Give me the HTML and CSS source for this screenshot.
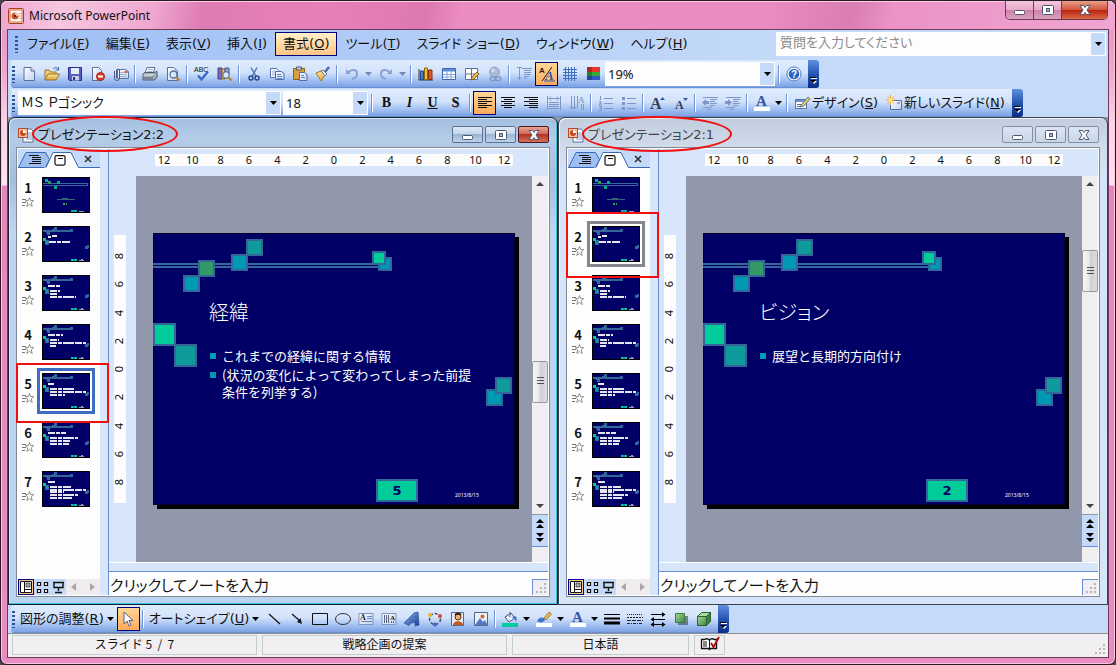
FILE: index.html
```html
<!DOCTYPE html>
<html lang="ja">
<head>
<meta charset="utf-8">
<title>Microsoft PowerPoint</title>
<link rel="stylesheet" href="styles.css">
</head>
<body>
<svg class="defs" aria-hidden="true">
  <defs>
    <linearGradient id="gSheet" x1="0" y1="0" x2="1" y2="1"><stop offset="0" stop-color="#fff"/><stop offset="1" stop-color="#c3d2ee"/></linearGradient>
    <linearGradient id="gGold" x1="0" y1="0" x2="0" y2="1"><stop offset="0" stop-color="#ffeaa0"/><stop offset="1" stop-color="#dfa035"/></linearGradient>
    <linearGradient id="gBlue" x1="0" y1="0" x2="1" y2="1"><stop offset="0" stop-color="#8db4ee"/><stop offset="1" stop-color="#1c3f94"/></linearGradient>
    <linearGradient id="gGreen" x1="0" y1="0" x2="1" y2="1"><stop offset="0" stop-color="#a5d79a"/><stop offset="1" stop-color="#3d8540"/></linearGradient>
  </defs>
  <symbol id="i-app" viewBox="0 0 16 16"><rect x=".5" y=".5" width="15" height="15" rx="1" fill="#fbe9e0" stroke="#a8401c"/><rect x="2" y="2" width="12" height="12" fill="#fff" stroke="#d0663c"/><circle cx="7" cy="8" r="3.6" fill="#cf5a2c"/><path d="M7 8V4.400A3.600 3.600 0 0 1 10.600 8z" fill="#f7c6ae"/><circle cx="7" cy="8" r="1.300" fill="#6b210b"/><path d="M12 5v1M12 7.500v1M12 10v1" stroke="#a8401c"/></symbol>
  <symbol id="i-doc" viewBox="0 0 16 16"><path d="M5 2h8l2 2v11H5z" fill="#fff" stroke="#54719f"/><path d="M10 6h4M10 8h4M10 10h4M8 12h6" stroke="#7f9ccc"/><rect x=".5" y="1.500" width="9" height="9" fill="#f3c3ab" stroke="#b54a24"/><circle cx="5" cy="6" r="3" fill="#c8481c"/><path d="M5 6V3A3 3 0 0 1 8 6z" fill="#fff"/></symbol>
  <symbol id="i-new" viewBox="0 0 16 16"><path d="M3 1.500h7l3.500 3.500v9.500H3z" fill="url(#gSheet)" stroke="#5a6f9c"/><path d="M10 1.500V5h3.500" fill="#dfe8f8" stroke="#5a6f9c"/></symbol>
  <symbol id="i-open" viewBox="0 0 16 16"><path d="M1 14V4h4l1.500 2H12v2" fill="#f6cf6c" stroke="#96752a"/><path d="M1 14l3-6h11.500l-3.500 6z" fill="url(#gGold)" stroke="#96752a"/><path d="M9 3c2-2 4-2 5 0M14.500 1v3h-3" fill="none" stroke="#2b6a9e"/></symbol>
  <symbol id="i-save" viewBox="0 0 16 16"><path d="M1.500 1.500h13v13h-12l-1-1z" fill="#5560c0" stroke="#2b2f86"/><path d="M4 2h8v6H4z" fill="#e5edfb"/><path d="M5 10h7v4.500H5z" fill="#c9cfec"/><path d="M6 11h2v3H6z" fill="#2b2f86"/></symbol>
  <symbol id="i-perm" viewBox="0 0 16 16"><path d="M2.500 1.500h6l3 3v10h-9z" fill="url(#gSheet)" stroke="#5a6f9c"/><circle cx="10.500" cy="10.500" r="4" fill="#dd3d22" stroke="#a32610"/><path d="M8 10.500h5" stroke="#fff" stroke-width="2"/></symbol>
  <symbol id="i-mail" viewBox="0 0 16 16"><path d="M4.500 3.500h8l3 2v7h-11z" fill="url(#gSheet)" stroke="#5a76a8"/><path d="M7 6.500h4M7 8.500h6M7 10.500h6" stroke="#9fb4dc"/><path d="M11.500 5h3v2h-3z" fill="#d4543a"/><path d="M1.500 5v7a2.500 2.500 0 0 0 5 0V4a1.700 1.700 0 0 0-3 0v8" fill="none" stroke="#475b86"/></symbol>
  <symbol id="i-print" viewBox="0 0 16 16"><path d="M5 1.500h8l-2 6H3z" fill="#fff" stroke="#5a6f9c"/><path d="M6 3.500h5M5.500 5.500h5" stroke="#9fb0d0"/><path d="M1 8l2-1.500h9l3-1v6L12 14H1z" fill="#a7b0c0" stroke="#4a556c"/><path d="M1.500 9h10" stroke="#e8ecf4"/><path d="M2 12h9" stroke="#4a556c"/><path d="M10 10h2v1h-2z" fill="#3fc13f"/></symbol>
  <symbol id="i-preview" viewBox="0 0 16 16"><path d="M2.500 1.500h6l4 3.500v9.500h-10z" fill="url(#gSheet)" stroke="#5a6f9c"/><circle cx="8.500" cy="8.500" r="3.500" fill="#d6eaf7" stroke="#51709b" stroke-width="1.300"/><path d="M11.500 11.500l3 3" stroke="#c77a1c" stroke-width="2.200"/></symbol>
  <symbol id="i-research" viewBox="0 0 16 16"><path d="M1 2h4v11H1z" fill="#7a6ab8" stroke="#4b3c83"/><path d="M5 3h3v10H5z" fill="#f0c462" stroke="#8f6a1e"/><path d="M8 2h4v7H8z" fill="#8ba7dc" stroke="#3e5a96"/><circle cx="9" cy="9" r="3.300" fill="#d6eaf7" stroke="#41608f"/><path d="M11.500 11.500l3 3" stroke="#c77a1c" stroke-width="2.200"/></symbol>
  <symbol id="i-cut" viewBox="0 0 16 16"><path d="M5 1.500l5 9M11 1.500l-5 9" stroke="#5578b0" stroke-width="1.500"/><circle cx="5" cy="12" r="2" fill="none" stroke="#26478e" stroke-width="1.500"/><circle cx="11" cy="12" r="2" fill="none" stroke="#26478e" stroke-width="1.500"/></symbol>
  <symbol id="i-copy" viewBox="0 0 16 16"><path d="M1.500 2.500h6l2 2v7h-8z" fill="#fff" stroke="#4e6cae"/><path d="M3 5h4M3 7h4M3 9h4" stroke="#8ba7dc"/><path d="M6.500 5.500h6l2.500 2v6H6.500z" fill="url(#gSheet)" stroke="#4e6cae"/><path d="M8 8.500h4M8 10.500h5M8 12.500h5" stroke="#5f85cc"/></symbol>
  <symbol id="i-paste" viewBox="0 0 16 16"><path d="M1.500 2.500h11v11h-11z" fill="#dc9f3d" stroke="#8b5f1b"/><path d="M4.500 1h5v3h-5z" fill="#c8cbd6" stroke="#565c70"/><path d="M7.500 6.500h5l2.500 2v6H7.500z" fill="url(#gSheet)" stroke="#4e6cae"/><path d="M9 9.500h3M9 11.500h4" stroke="#5f85cc"/></symbol>
  <symbol id="i-brush" viewBox="0 0 16 16"><path d="M1 7l5-2 4 4-4 6z" fill="url(#gGold)" stroke="#a77a1c"/><path d="M6 5l2-1 4 4-2 2z" fill="#e6e9f2" stroke="#666f86"/><path d="M10 6l4-5" stroke="#5565a6" stroke-width="2.400"/></symbol>
  <symbol id="i-undo" viewBox="0 0 16 16"><path d="M2 3v5h5z" fill="#8aa3d2"/><path d="M4 6.500c4-4 9-3 9 1 0 3-2 5-5 5.500" fill="none" stroke="#8aa3d2" stroke-width="2"/></symbol>
  <symbol id="i-redo" viewBox="0 0 16 16"><path d="M14 3v5H9z" fill="#8aa3d2"/><path d="M12 6.500c-4-4-9-3-9 1 0 3 2 5 5 5.500" fill="none" stroke="#8aa3d2" stroke-width="2"/></symbol>
  <symbol id="i-chart" viewBox="0 0 16 16"><path d="M1 3v11h14" fill="none" stroke="#333"/><path d="M2.500 5h3v8.500h-3z" fill="#4c7fd6" stroke="#25427f"/><path d="M6.500 2h3v11.500h-3z" fill="#f4c132" stroke="#8a6510"/><path d="M10.500 4h3.500v9.500h-3.500z" fill="#e0542c" stroke="#862a10"/></symbol>
  <symbol id="i-table" viewBox="0 0 16 16"><path d="M1.500 2.500h13v11h-13z" fill="#fff" stroke="#3e66b4"/><path d="M2 3h12v2.500H2z" fill="#5f8cd9"/><path d="M2 8.500h12M2 11h12M6 5v8M10 5v8" stroke="#87a8de"/></symbol>
  <symbol id="i-tborder" viewBox="0 0 16 16"><path d="M1.500 2.500h12v11h-12z" fill="#fff" stroke="#5a6f9c"/><path d="M7.500 3v10M2 8h11" stroke="#5a6f9c"/><path d="M7 14l1-3 5-5 2 2-5 5z" fill="#f1b84a" stroke="#8a5c1b"/></symbol>
  <symbol id="i-link" viewBox="0 0 16 16"><circle cx="7.500" cy="6" r="5" fill="#a9bbdb" stroke="#8fa3ca"/><circle cx="6" cy="4.500" r="2" fill="#cad7ec"/><rect x="3" y="11" width="6" height="3.500" rx="1.700" fill="none" stroke="#8095bf" stroke-width="1.300"/><rect x="8" y="11" width="6" height="3.500" rx="1.700" fill="none" stroke="#8095bf" stroke-width="1.300"/></symbol>
  <symbol id="i-expand" viewBox="0 0 16 16"><path d="M3.500 1v12M1.500 11l2 2.500 2-2.500M1 1.500h5" fill="none" stroke="#7f97c6"/><path d="M6 2.500h10M8 4.500h7M8 6.500h7M8 8.500h7M8 10.500h5M8 12.500h3" stroke="#7f97c6"/></symbol>
  <symbol id="i-grid" viewBox="0 0 16 16"><path d="M3.500 1v14M6.500 1v14M9.500 1v14M12.500 1v14M1 3.500h14M1 6.500h14M1 9.500h14M1 12.500h14" stroke="#3f6fc4"/></symbol>
  <symbol id="i-color" viewBox="0 0 16 16"><path d="M2 1h13v5H2z" fill="#e8352a"/><path d="M2 6h13v4H2z" fill="#2fae3b"/><path d="M2 10h13v4H2z" fill="#3158c4"/><path d="M2 1h5v13H2z" fill="#000" opacity=".25"/></symbol>
  <symbol id="i-left" viewBox="0 0 16 16"><path d="M1 2.500h14M1 4.500h9M1 6.500h14M1 8.500h9M1 10.500h14M1 12.500h9" stroke="#111"/></symbol>
  <symbol id="i-center" viewBox="0 0 16 16"><path d="M1 2.500h14M4 4.500h8M1 6.500h14M4 8.500h8M1 10.500h14M4 12.500h8" stroke="#111"/></symbol>
  <symbol id="i-right" viewBox="0 0 16 16"><path d="M1 2.500h14M6 4.500h9M1 6.500h14M6 8.500h9M1 10.500h14M6 12.500h9" stroke="#111"/></symbol>
  <symbol id="i-distrib" viewBox="0 0 16 16"><path d="M1.500 1v14M14.500 1v14M3 3.500h10M5 1.500l-2 2 2 2M11 1.500l2 2-2 2M3 7.500h10M3 9.500h10M3 11.500h10M3 13.500h10" fill="none" stroke="#7f97c6"/></symbol>
  <symbol id="i-num" viewBox="0 0 16 16"><path d="M6 3.500h9M6 8.500h9M6 13.500h9M2.500 1v4M1 6.500h2v2H1.500v1.500H4M1 11.500h2.500v4H1M1.500 13.500h2" fill="none" stroke="#7f97c6"/></symbol>
  <symbol id="i-bullet" viewBox="0 0 16 16"><path d="M6 3.500h9M6 8.500h9M6 13.500h9" stroke="#7f97c6"/><path d="M1 2h3v3H1zM1 7h3v3H1zM1 12h3v3H1z" fill="#7f97c6"/></symbol>
  <symbol id="i-outdent" viewBox="0 0 16 16"><path d="M1 2.500h15M8 4.500h7M8 6.500h5M8 8.500h7M8 10.500h5M1 12.500h9M5 14.500h4" stroke="#7f97c6"/><path d="M0 7.500L4 4v2h3v3H4v2z" fill="#7f97c6"/></symbol>
  <symbol id="i-indent" viewBox="0 0 16 16"><path d="M1 2.500h15M8 4.500h7M8 6.500h5M8 8.500h7M8 10.500h5M1 12.500h9M5 14.500h4" stroke="#7f97c6"/><path d="M7 7.500L3 4v2H0v3h3v2z" fill="#7f97c6"/></symbol>
  <symbol id="i-design" viewBox="0 0 16 16"><path d="M1.500 4.500h11v9h-11z" fill="#fff" stroke="#54719f"/><path d="M2 5h10v2H2z" fill="#6b92d6"/><path d="M3 9.500h6M3 11.500h4" stroke="#54719f"/><path d="M6 12l2-3 6-7 2 2-6 7z" fill="#e9c96f" stroke="#4b5f80" stroke-width=".8"/></symbol>
  <symbol id="i-newslide" viewBox="0 0 16 16"><path d="M4.500 5.500h11v9h-11z" fill="url(#gSheet)" stroke="#54719f"/><path d="M11 8h3" stroke="#54719f"/><path d="M4.500 0v10M0 5h9.500M1.500 1.500l6.500 7M8 1.500l-6.500 7" stroke="#f0a92a"/><circle cx="4.700" cy="5" r="2" fill="#ffe98a"/></symbol>
  <symbol id="i-pointer" viewBox="0 0 16 16"><path d="M4 1v12l3-3 2 5 2-1-2-4.500h4z" fill="#fff" stroke="#555f86"/></symbol>
  <symbol id="i-line" viewBox="0 0 16 16"><path d="M3 3l11 10" stroke="#111" stroke-width="1.200"/></symbol>
  <symbol id="i-arrow" viewBox="0 0 16 16"><path d="M3 3l8 7" stroke="#111" stroke-width="1.200"/><path d="M13 13l-5-2 3.500-4z" fill="#111"/></symbol>
  <symbol id="i-rect" viewBox="0 0 16 16"><path d="M.5 2.500h15v11H.5z" fill="none" stroke="#111"/></symbol>
  <symbol id="i-oval" viewBox="0 0 16 16"><ellipse cx="8" cy="8" rx="7.500" ry="5.500" fill="none" stroke="#333"/></symbol>
  <symbol id="i-wordart" viewBox="0 0 16 16"><path d="M0 12L10 2l4-1 1 13-4 1v-3.500L7 12l-2 2.500zM8.500 9l2.500-.5V5.500z" fill="url(#gBlue)" stroke="#234d9f" stroke-width=".7"/></symbol>
  <symbol id="i-diagram" viewBox="0 0 16 16"><circle cx="8" cy="8" r="5.500" fill="none" stroke="#41506e" stroke-width="1.500" stroke-dasharray="3 2"/><circle cx="3" cy="4" r="2" fill="#e9b82f"/><circle cx="13" cy="5" r="2" fill="#d5482c"/><circle cx="8" cy="13.500" r="2" fill="#4c5fc9"/></symbol>
  <symbol id="i-clip" viewBox="0 0 16 16"><path d="M1.500 1.500h12v13h-12z" fill="#e9eefa" stroke="#54648e"/><circle cx="8" cy="6" r="3" fill="#f0b070" stroke="#5b2e0d"/><path d="M3 14c0-5 10-5 10 0z" fill="#c65a1e"/><path d="M5 4c2-2 4-2 6 0" stroke="#3e1f0a" stroke-width="2" fill="none"/></symbol>
  <symbol id="i-pic" viewBox="0 0 16 16"><path d="M1.500 1.500h13v13h-13z" fill="#e9f1fd" stroke="#54648e"/><path d="M2 14l5-7 3 4 2-2 2.500 5z" fill="#5377c4"/><circle cx="9.500" cy="5.500" r="2" fill="#e4602b"/></symbol>
  <symbol id="i-fill" viewBox="0 0 16 16"><path d="M3 6l6-4 4 5-6 4z" fill="#e8eefa" stroke="#3f5686"/><path d="M8 1v5" stroke="#3f5686"/><path d="M12 5c3 0 3 3 2 6-1-3-2-4-4-4z" fill="#3f74cc"/><path d="M0 12h16v4H0z" fill="#00cc99"/></symbol>
  <symbol id="i-lcolor" viewBox="0 0 16 16"><path d="M1 10c2-4 5-4 7-3l1 2c-2 3-5 3-8 1z" fill="#3f74cc"/><path d="M8 7l5-6 2.500 2L10 9z" fill="#eab54b" stroke="#8d6420" stroke-width=".7"/><path d="M0 12h16v4H0z" fill="#fff"/></symbol>
  <symbol id="i-lweight" viewBox="0 0 16 16"><path d="M0 3.500h16" stroke="#000"/><path d="M0 7.500h16" stroke="#000" stroke-width="2"/><path d="M0 12h16" stroke="#000" stroke-width="3"/></symbol>
  <symbol id="i-dash" viewBox="0 0 16 16"><path d="M0 3.500h16" stroke="#222" stroke-dasharray="1 1"/><path d="M0 6.500h16" stroke="#222" stroke-dasharray="2 1"/><path d="M0 9.500h16" stroke="#222" stroke-dasharray="4 1"/><path d="M0 12.500h16" stroke="#222" stroke-dasharray="3 1 1 1"/></symbol>
  <symbol id="i-arrows" viewBox="0 0 16 16"><path d="M1 3.500h13M2 8.500h13M1 13.500h14" stroke="#000"/><path d="M15.500 3.500L12 1v5zM.5 8.500L4 6v5zM15.500 13.500L12 11v5zM.5 13.500L4 11v5z" fill="#000"/></symbol>
  <symbol id="i-shadow" viewBox="0 0 16 16"><path d="M5 5h10v9H5z" fill="#37444c" opacity=".6"/><path d="M2.500 2.500h9v9h-9z" fill="url(#gGreen)" stroke="#3d7a3f"/></symbol>
  <symbol id="i-cube" viewBox="0 0 16 16"><path d="M1.500 5.500l4-4h9v9l-4 4h-9z" fill="#a9dba0" stroke="#28622c"/><path d="M1.500 5.500h9v9h-9z" fill="url(#gGreen)" stroke="#28622c"/><path d="M10.500 5.500l4-4v9l-4 4z" fill="#3c8140" stroke="#28622c"/></symbol>
  <symbol id="i-normal" viewBox="0 0 16 16"><path d="M2.500 2.500h11v11h-11zM6.500 3v10M7 10.500h6" fill="#fff" stroke="#111"/><path d="M8 4h4v4H8z" fill="#a9a9a9" stroke="#111" stroke-width=".6"/></symbol>
  <symbol id="i-sorter" viewBox="0 0 16 16"><path d="M3.500 3.500h3v3h-3zM10.500 3.500h3v3h-3zM3.500 10.500h3v3h-3zM10.500 10.500h3v3h-3z" fill="#fff" stroke="#111" stroke-width="1.200"/></symbol>
  <symbol id="i-show" viewBox="0 0 16 16"><path d="M3 3.500h11M4 4v4.500h9V4M8.500 9v3M5 13.500h7" fill="none" stroke="#111" stroke-width="1.400"/></symbol>
  <symbol id="i-dd" viewBox="0 0 7 4"><path d="M0 0h7L3.500 4z"/></symbol>
  <symbol id="i-more" viewBox="0 0 8 8"><path d="M1 1.500h6" stroke="#fff"/><path d="M1 4h6L4 7z" fill="#fff"/><path d="M0 .5h6" stroke="#000"/><path d="M0 3h6L3 6z"/></symbol>
  <symbol id="i-min" viewBox="0 0 14 12"><rect x="1.500" y="6.500" width="10" height="4" rx="1" fill="#fff" stroke="#4f5870"/></symbol>
  <symbol id="i-max" viewBox="0 0 14 12"><rect x="1.500" y="1.500" width="11" height="9" rx="1" fill="#fff" stroke="#4f5870"/><rect x="5.500" y="4.500" width="3" height="3" fill="#9fb4d8" stroke="#4f5870"/></symbol>
  <symbol id="i-x" viewBox="0 0 14 12"><path d="M2 1.500h3.500L7 3.500l1.500-2H12L9 6l3 4.500H8.500L7 8.500l-1.500 2H2L5 6z" fill="#fff" stroke="#4f5870"/></symbol>
  <symbol id="i-star" viewBox="0 0 12 10"><path d="M7.500.5L8.700 3.600h3L9.300 5.800l.9 3.700-2.700-2.100-2.700 2.100.9-3.700L3.300 3.600h3z" fill="#fff" stroke="#777" stroke-width=".8"/><path d="M0 2.500h4M0 5.500h4M0 8.500h3" stroke="#777"/></symbol>
  <symbol id="i-tabs" viewBox="0 0 82 19"><path d="M.5 18.500L8 3.500h19.500l4 7-4 8z" fill="#9fbef2" stroke="#3b68b2"/><path d="M26 18.500h2l7-15h18l7.500 15H82V19H26z" fill="#fdfdfd"/><path d="M28 18.500l7-15h18l7.500 15H82" fill="none" stroke="#3b68b2"/></symbol>
  <symbol id="i-outline" viewBox="0 0 12 10"><path d="M0 .5h10M3 2.500h9M3 4.500h9M3 6.500h9M0 8.500h12" stroke="#111"/></symbol>
  <symbol id="i-slides" viewBox="0 0 12 11"><rect x="1" y=".6" width="10" height="9.500" rx="1.500" fill="#fff" stroke="#111" stroke-width="1.200"/><path d="M4 3.500h5" stroke="#111"/></symbol>
  <symbol id="i-tabx" viewBox="0 0 8 8"><path d="M1 1l6 6M7 1L1 7" stroke="#333" stroke-width="1.700"/></symbol>
  <symbol id="i-up" viewBox="0 0 8 4"><path d="M0 4l4-4 4 4z" fill="#444"/></symbol>
  <symbol id="i-down" viewBox="0 0 8 4"><path d="M0 0l4 4 4-4z" fill="#444"/></symbol>
  <symbol id="i-dup" viewBox="0 0 8 10"><path d="M0 4l4-4 4 4zM0 9l4-4 4 4z"/></symbol>
  <symbol id="i-ddown" viewBox="0 0 8 10"><path d="M0 1l4 4 4-4zM0 6l4 4 4-4z"/></symbol>
  <symbol id="i-prev" viewBox="0 0 5 8"><path d="M5 0v8L0 4z" fill="#aaa6a6"/></symbol>
  <symbol id="i-next" viewBox="0 0 5 8"><path d="M0 0v8l5-4z" fill="#aaa6a6"/></symbol>
  <symbol id="i-size" viewBox="0 0 12 12"><path d="M9 1h2v2H9zM9 5h2v2H9zM5 5h2v2H5zM9 9h2v2H9zM5 9h2v2H5zM1 9h2v2H1z" fill="#b9b5b2"/></symbol>
  <symbol id="i-book" viewBox="0 0 20 16"><path d="M1.500 3.500h3C7 2 9 3 9.500 4.500 10 3 12 2 14.500 3.500h2v9h-6l-1 1-1-1h-7z" fill="#fff" stroke="#111" stroke-width="1.300"/><path d="M9.500 4.500v8M3 6h4M3 8h4M3 10h4" stroke="#111"/><path d="M11 7l2.500 4L19 1" fill="none" stroke="#a80f0f" stroke-width="2"/></symbol>

  <symbol id="slide-art" viewBox="0 0 362 272">
    <path d="M0 31h228M0 34h228" stroke="#336699" stroke-width="2"/>
    <g stroke="#336699" stroke-width="2">
      <rect x="94" y="7" width="15" height="15" fill="#0f9b9b"/><rect x="79" y="22" width="15" height="15" fill="#0099b4"/>
      <rect x="46" y="28" width="15" height="15" fill="#339966"/><rect x="31" y="43" width="15" height="15" fill="#0099b4"/>
      <rect x="226" y="25" width="12" height="12" fill="#0099b4"/><rect x="220" y="19" width="12" height="12" fill="#00cc99"/>
      <rect x="1" y="91" width="21" height="21" fill="#00cc99"/><rect x="22" y="112" width="21" height="21" fill="#0f9b9b"/>
      <rect x="334" y="157" width="15" height="15" fill="#0099b4"/><rect x="343" y="145" width="15" height="15" fill="#0f9b9b"/>
    </g>
  </symbol>
  <symbol id="thumb-art" viewBox="0 0 48 36">
    <path d="M0 0h48v36H0z" fill="#000066"/>
    <path d="M1 4h30v2H1zM12 1h3v3h-3zM10 3h3v3h-3zM4 5h4v2H4zM5 6h3v3H5zM28 3h3v3h-3zM3 14h4v5H3zM45 19h2v3h-2zM43 20h3v3h-3z" fill="#336699"/>
    <path d="M1 12h3v3H1zM29 33h6v2h-6z" fill="#00cc99"/><path d="M4 15h2v3H4zM31 33h2v2h-2z" fill="#0f9b9b"/><path d="M37 34h5M39 33h2" stroke="#99a"/>
    <path d="M0 0h48v36H0z" fill="none" stroke="#000" stroke-width="2"/>
  </symbol>
  <symbol id="thumb1" viewBox="0 0 48 36">
    <path d="M0 0h48v36H0z" fill="#000066"/><path d="M1 6.500h44v2H1" fill="none" stroke="#336699"/>
    <path d="M3 2h3v3H3zM12 9h3v3h-3zM15 4h3v3h-3z" fill="#00b090"/><path d="M6 4h3v3H6z" fill="#339966"/>
    <path d="M15 22.500h18M20 21.500h6" stroke="#367"/><path d="M21 27h4" stroke="#396" stroke-width="2" stroke-dasharray="2 1"/>
    <path d="M29 33h6v2h-6z" fill="#00b090"/><path d="M37 34h5" stroke="#99a"/>
    <path d="M0 0h48v36H0z" fill="none" stroke="#000" stroke-width="2"/>
  </symbol>
  <symbol id="thumb2" viewBox="0 0 48 36"><use href="#thumb-art"/><path d="M6 11h3M10 10h5M7 16h21" class="tl"/></symbol>
  <symbol id="thumb3" viewBox="0 0 48 36"><use href="#thumb-art"/><path d="M6 11h13M8 16h10M8 19h8M8 22h26" class="tl"/></symbol>
  <symbol id="thumb4" viewBox="0 0 48 36"><use href="#thumb-art"/><path d="M6 11h15M8 16h9M8 19h36M8 22h6" class="tl"/></symbol>
  <symbol id="thumb5" viewBox="0 0 48 36"><use href="#thumb-art"/><path d="M6 11h6M8 16h25M8 19h36M8 22h15" class="tl"/></symbol>
  <symbol id="thumb6" viewBox="0 0 48 36"><use href="#thumb-art"/><path d="M6 11h18M8 16h28M8 19h20M8 22h19" class="tl"/></symbol>
  <symbol id="thumb7" viewBox="0 0 48 36"><use href="#thumb-art"/><path d="M6 11h7M8 16h21M8 19h36M8 21h14M8 24h28M8 27h22" class="tl"/></symbol>
</svg>

<div class="frame">
  <header class="titlebar">
    <svg class="ic"><use href="#i-app"/></svg>
    <h1>Microsoft PowerPoint</h1>
    <div class="caption-buttons">
      <button aria-label="最小化"><svg><use href="#i-min"/></svg></button>
      <button aria-label="最大化"><svg><use href="#i-max"/></svg></button>
      <button class="close" aria-label="閉じる"><svg><use href="#i-x"/></svg></button>
    </div>
  </header>

  <div class="client">
    <nav class="menubar">
      <i class="grip"></i>
      <button>ファイル(<u>F</u>)</button><button>編集(<u>E</u>)</button><button>表示(<u>V</u>)</button><button>挿入(<u>I</u>)</button><button class="on">書式(<u>O</u>)</button><button>ツール(<u>T</u>)</button><button>スライド ショー(<u>D</u>)</button><button>ウィンドウ(<u>W</u>)</button><button>ヘルプ(<u>H</u>)</button>
      <div class="ask"><input type="text" aria-label="質問" placeholder="質問を入力してください"><button class="arrow" aria-label="質問の一覧"><svg><use href="#i-dd"/></svg></button></div>
    </nav>

    <div class="toolbar">
      <i class="grip"></i>
      <button class="tb" aria-label="新規作成"><svg class="ic"><use href="#i-new"/></svg></button>
      <button class="tb" aria-label="開く"><svg class="ic"><use href="#i-open"/></svg></button>
      <button class="tb" aria-label="上書き保存"><svg class="ic"><use href="#i-save"/></svg></button>
      <button class="tb" aria-label="アクセス許可"><svg class="ic"><use href="#i-perm"/></svg></button>
      <button class="tb" aria-label="電子メール"><svg class="ic"><use href="#i-mail"/></svg></button>
      <i class="sep"></i>
      <button class="tb" aria-label="印刷"><svg class="ic"><use href="#i-print"/></svg></button>
      <button class="tb" aria-label="印刷プレビュー"><svg class="ic"><use href="#i-preview"/></svg></button>
      <i class="sep"></i>
      <button class="tb" aria-label="スペル チェック"><svg class="ic" viewBox="0 0 16 16"><text x="0" y="6" font-family="Liberation Sans" font-size="7" fill="#111">ABC</text><path d="M4 9.500l3.500 4L14 5.500" fill="none" stroke="#3a68c8" stroke-width="2.400"/></svg></button>
      <button class="tb" aria-label="リサーチ"><svg class="ic"><use href="#i-research"/></svg></button>
      <i class="sep"></i>
      <button class="tb" aria-label="切り取り"><svg class="ic"><use href="#i-cut"/></svg></button>
      <button class="tb" aria-label="コピー"><svg class="ic"><use href="#i-copy"/></svg></button>
      <button class="tb" aria-label="貼り付け"><svg class="ic"><use href="#i-paste"/></svg></button>
      <button class="tb" aria-label="書式のコピー"><svg class="ic"><use href="#i-brush"/></svg></button>
      <i class="sep"></i>
      <button class="tb" aria-label="元に戻す"><svg class="ic"><use href="#i-undo"/></svg></button>
      <button class="dd off" aria-label="元に戻す一覧"><svg><use href="#i-dd"/></svg></button>
      <button class="tb" aria-label="やり直し"><svg class="ic"><use href="#i-redo"/></svg></button>
      <button class="dd off" aria-label="やり直し一覧"><svg><use href="#i-dd"/></svg></button>
      <i class="sep"></i>
      <button class="tb" aria-label="グラフ"><svg class="ic"><use href="#i-chart"/></svg></button>
      <button class="tb" aria-label="表"><svg class="ic"><use href="#i-table"/></svg></button>
      <button class="tb" aria-label="罫線"><svg class="ic"><use href="#i-tborder"/></svg></button>
      <button class="tb" aria-label="ハイパーリンク"><svg class="ic"><use href="#i-link"/></svg></button>
      <i class="sep"></i>
      <button class="tb" aria-label="すべて展開"><svg class="ic"><use href="#i-expand"/></svg></button>
      <button class="tb on" aria-label="書式の表示"><svg class="ic" viewBox="0 0 16 16"><text x="0" y="7" font-family="Liberation Sans" font-weight="bold" font-size="8" fill="#222">A</text><path d="M3 15L13 1" stroke="#222"/><text x="6" y="14" font-family="Liberation Serif" font-weight="bold" font-style="italic" font-size="13" fill="#2b58b8">A</text><path d="M5 15h11" stroke="#2b58b8"/></svg></button>
      <button class="tb" aria-label="グリッド"><svg class="ic"><use href="#i-grid"/></svg></button>
      <button class="tb" aria-label="カラー"><svg class="ic"><use href="#i-color"/></svg></button>
      <div class="combo zoom"><select aria-label="ズーム"><option>19%</option></select><span class="arrow"><svg><use href="#i-dd"/></svg></span></div>
      <i class="sep"></i>
      <button class="tb" aria-label="ヘルプ"><svg class="ic" viewBox="0 0 16 16"><circle cx="8" cy="8" r="7" fill="#fff" stroke="#4e78bc"/><circle cx="8" cy="8" r="5.300" fill="#2765c8"/><text x="5" y="12" font-family="Liberation Sans" font-weight="bold" font-size="10" fill="#fff">?</text></svg></button>
      <button class="cap" aria-label="ツール バー オプション"><svg><use href="#i-more"/></svg></button>
    </div>

    <div class="toolbar">
      <i class="grip"></i>
      <div class="combo font"><select aria-label="フォント"><option>ＭＳ Ｐゴシック</option></select><span class="arrow"><svg><use href="#i-dd"/></svg></span></div>
      <div class="combo size"><select aria-label="フォント サイズ"><option>18</option></select><span class="arrow"><svg><use href="#i-dd"/></svg></span></div>
      <i class="sep"></i>
      <button class="tb ltr b">B</button><button class="tb ltr i">I</button><button class="tb ltr u">U</button><button class="tb ltr s">S</button>
      <i class="sep"></i>
      <button class="tb on" aria-label="左揃え"><svg class="ic"><use href="#i-left"/></svg></button>
      <button class="tb" aria-label="中央揃え"><svg class="ic"><use href="#i-center"/></svg></button>
      <button class="tb" aria-label="右揃え"><svg class="ic"><use href="#i-right"/></svg></button>
      <button class="tb" aria-label="均等割り付け"><svg class="ic"><use href="#i-distrib"/></svg></button>
      <button class="tb" aria-label="縦書き"><svg class="ic" viewBox="0 0 16 16"><path d="M2.500 1v13M5.500 1v13M8.500 1v13M1 12l1.500 2L4 12M4 12l1.500 2L7 12M12.500 9v6M14.500 9v6" fill="none" stroke="#7f97c6"/><text x="9" y="8" font-family="Liberation Serif" font-size="9" fill="#6f88bb">A</text></svg></button>
      <i class="sep"></i>
      <button class="tb" aria-label="段落番号"><svg class="ic"><use href="#i-num"/></svg></button>
      <button class="tb" aria-label="箇条書き"><svg class="ic"><use href="#i-bullet"/></svg></button>
      <i class="sep"></i>
      <button class="tb" aria-label="文字の拡大"><svg class="ic" viewBox="0 0 16 16"><text x="0" y="14" font-family="Liberation Serif" font-weight="bold" font-size="16" fill="#333d55">A</text><path d="M10 5l2.500-3L15 5z" fill="#2c57b3"/></svg></button>
      <button class="tb" aria-label="文字の縮小"><svg class="ic" viewBox="0 0 16 16"><text x="2" y="14" font-family="Liberation Serif" font-weight="bold" font-size="12" fill="#333d55">A</text><path d="M10 3h5l-2.500 3z" fill="#2c57b3"/></svg></button>
      <i class="sep"></i>
      <button class="tb" aria-label="インデント解除"><svg class="ic"><use href="#i-outdent"/></svg></button>
      <button class="tb" aria-label="インデント"><svg class="ic"><use href="#i-indent"/></svg></button>
      <i class="sep"></i>
      <button class="tb" aria-label="フォントの色"><svg class="ic" viewBox="0 0 16 16"><text x="2" y="11" font-family="Liberation Serif" font-weight="bold" font-size="15" fill="#35569b">A</text><path d="M0 12h16v4H0z" fill="#fff"/></svg></button>
      <button class="dd" aria-label="フォントの色一覧"><svg><use href="#i-dd"/></svg></button>
      <i class="sep"></i>
      <button class="txt"><svg class="ic"><use href="#i-design"/></svg><span>デザイン(<u>S</u>)</span></button>
      <button class="txt"><svg class="ic"><use href="#i-newslide"/></svg><span>新しいスライド(<u>N</u>)</span></button>
      <button class="cap" aria-label="ツール バー オプション"><svg><use href="#i-more"/></svg></button>
    </div>

    <main class="mdi">
      <section class="win">
        <header class="wintitle">
          <svg class="ic"><use href="#i-doc"/></svg><h2>プレゼンテーション2:2</h2>
          <div class="winbuttons"><button aria-label="最小化"><svg><use href="#i-min"/></svg></button><button aria-label="最大化"><svg><use href="#i-max"/></svg></button><button class="close" aria-label="閉じる"><svg><use href="#i-x"/></svg></button></div>
          <i class="ring"></i>
        </header>
        <div class="doc">
          <aside class="pane">
            <div class="tabs"><svg class="tabart"><use href="#i-tabs"/></svg><button aria-label="アウトライン"><svg class="t1"><use href="#i-outline"/></svg></button><button aria-label="スライド"><svg class="t2"><use href="#i-slides"/></svg></button><button aria-label="閉じる"><svg class="t3"><use href="#i-tabx"/></svg></button></div>
            <ol class="thumbs">
              <li><span class="no"><b>1</b><svg><use href="#i-star"/></svg></span><svg class="th"><use href="#thumb1"/></svg></li>
              <li><span class="no"><b>2</b><svg><use href="#i-star"/></svg></span><svg class="th"><use href="#thumb2"/></svg></li>
              <li><span class="no"><b>3</b><svg><use href="#i-star"/></svg></span><svg class="th"><use href="#thumb3"/></svg></li>
              <li><span class="no"><b>4</b><svg><use href="#i-star"/></svg></span><svg class="th"><use href="#thumb4"/></svg></li>
              <li class="sel"><span class="no"><b>5</b><svg><use href="#i-star"/></svg></span><svg class="th"><use href="#thumb5"/></svg><i class="mark"></i></li>
              <li><span class="no"><b>6</b><svg><use href="#i-star"/></svg></span><svg class="th"><use href="#thumb6"/></svg></li>
              <li><span class="no"><b>7</b><svg><use href="#i-star"/></svg></span><svg class="th"><use href="#thumb7"/></svg></li>
            </ol>
            <div class="views"><button class="on" aria-label="標準表示"><svg class="ic"><use href="#i-normal"/></svg></button><button aria-label="スライド一覧"><svg class="ic"><use href="#i-sorter"/></svg></button><button aria-label="スライド ショー"><svg class="ic"><use href="#i-show"/></svg></button><span class="hscroll"><svg><use href="#i-prev"/></svg><svg><use href="#i-next"/></svg></span></div>
          </aside>
          <div class="split"></div>
          <div class="edit">
            <div class="rowtop"><div class="hruler"><span>12</span><span>10</span><span>8</span><span>6</span><span>4</span><span>2</span><span>0</span><span>2</span><span>4</span><span>6</span><span>8</span><span>10</span><span>12</span></div></div>
            <div class="rowmid">
              <div class="vcol"><div class="vruler"><span>8</span><span>6</span><span>4</span><span>2</span><span>0</span><span>2</span><span>4</span><span>6</span><span>8</span></div></div>
              <div class="stage">
                <article class="slide">
                  <svg class="art"><use href="#slide-art"/></svg>
                  <h3>経緯</h3>
                  <ul><li>これまでの経緯に関する情報</li><li>(状況の変化によって変わってしまった前提条件を列挙する)</li></ul>
                  <footer><b>5</b><time>2013/8/15</time></footer>
                </article>
              </div>
              <div class="scroll">
                <button aria-label="上へ"><svg class="a"><use href="#i-up"/></svg></button>
                <div class="track at5"><i class="knob"></i></div>
                <button aria-label="下へ"><svg class="a"><use href="#i-down"/></svg></button>
                <div class="jump"><button aria-label="前のスライド"><svg><use href="#i-dup"/></svg></button><button aria-label="次のスライド"><svg><use href="#i-ddown"/></svg></button></div>
              </div>
            </div>
            <div class="hsplit"></div>
            <div class="notes"><textarea rows="1" aria-label="ノート" placeholder="クリックしてノートを入力"></textarea><div class="corner"><svg><use href="#i-size"/></svg></div></div>
          </div>
        </div>
      </section>

      <section class="win idle">
        <header class="wintitle">
          <svg class="ic"><use href="#i-doc"/></svg><h2>プレゼンテーション2:1</h2>
          <div class="winbuttons"><button aria-label="最小化"><svg><use href="#i-min"/></svg></button><button aria-label="最大化"><svg><use href="#i-max"/></svg></button><button class="close" aria-label="閉じる"><svg><use href="#i-x"/></svg></button></div>
          <i class="ring"></i>
        </header>
        <div class="doc">
          <aside class="pane">
            <div class="tabs"><svg class="tabart"><use href="#i-tabs"/></svg><button aria-label="アウトライン"><svg class="t1"><use href="#i-outline"/></svg></button><button aria-label="スライド"><svg class="t2"><use href="#i-slides"/></svg></button><button aria-label="閉じる"><svg class="t3"><use href="#i-tabx"/></svg></button></div>
            <ol class="thumbs">
              <li><span class="no"><b>1</b><svg><use href="#i-star"/></svg></span><svg class="th"><use href="#thumb1"/></svg></li>
              <li class="sel"><span class="no"><b>2</b><svg><use href="#i-star"/></svg></span><svg class="th"><use href="#thumb2"/></svg><i class="mark"></i></li>
              <li><span class="no"><b>3</b><svg><use href="#i-star"/></svg></span><svg class="th"><use href="#thumb3"/></svg></li>
              <li><span class="no"><b>4</b><svg><use href="#i-star"/></svg></span><svg class="th"><use href="#thumb4"/></svg></li>
              <li><span class="no"><b>5</b><svg><use href="#i-star"/></svg></span><svg class="th"><use href="#thumb5"/></svg></li>
              <li><span class="no"><b>6</b><svg><use href="#i-star"/></svg></span><svg class="th"><use href="#thumb6"/></svg></li>
              <li><span class="no"><b>7</b><svg><use href="#i-star"/></svg></span><svg class="th"><use href="#thumb7"/></svg></li>
            </ol>
            <div class="views"><button class="on" aria-label="標準表示"><svg class="ic"><use href="#i-normal"/></svg></button><button aria-label="スライド一覧"><svg class="ic"><use href="#i-sorter"/></svg></button><button aria-label="スライド ショー"><svg class="ic"><use href="#i-show"/></svg></button><span class="hscroll"><svg><use href="#i-prev"/></svg><svg><use href="#i-next"/></svg></span></div>
          </aside>
          <div class="split"></div>
          <div class="edit">
            <div class="rowtop"><div class="hruler"><span>12</span><span>10</span><span>8</span><span>6</span><span>4</span><span>2</span><span>0</span><span>2</span><span>4</span><span>6</span><span>8</span><span>10</span><span>12</span></div></div>
            <div class="rowmid">
              <div class="vcol"><div class="vruler"><span>8</span><span>6</span><span>4</span><span>2</span><span>0</span><span>2</span><span>4</span><span>6</span><span>8</span></div></div>
              <div class="stage">
                <article class="slide">
                  <svg class="art"><use href="#slide-art"/></svg>
                  <h3>ビジョン</h3>
                  <ul><li>展望と長期的方向付け</li></ul>
                  <footer><b>2</b><time>2013/8/15</time></footer>
                </article>
              </div>
              <div class="scroll">
                <button aria-label="上へ"><svg class="a"><use href="#i-up"/></svg></button>
                <div class="track at2"><i class="knob"></i></div>
                <button aria-label="下へ"><svg class="a"><use href="#i-down"/></svg></button>
                <div class="jump"><button aria-label="前のスライド"><svg><use href="#i-dup"/></svg></button><button aria-label="次のスライド"><svg><use href="#i-ddown"/></svg></button></div>
              </div>
            </div>
            <div class="hsplit"></div>
            <div class="notes"><textarea rows="1" aria-label="ノート" placeholder="クリックしてノートを入力"></textarea><div class="corner"><svg><use href="#i-size"/></svg></div></div>
          </div>
        </div>
      </section>
    </main>

    <div class="toolbar drawbar">
      <i class="grip"></i>
      <button class="txt"><span>図形の調整(<u>R</u>)</span><svg class="da"><use href="#i-dd"/></svg></button>
      <button class="tb on" aria-label="選択"><svg class="ic"><use href="#i-pointer"/></svg></button>
      <i class="sep"></i>
      <button class="txt"><span>オートシェイプ(<u>U</u>)</span><svg class="da"><use href="#i-dd"/></svg></button>
      <button class="tb" aria-label="直線"><svg class="ic"><use href="#i-line"/></svg></button>
      <button class="tb" aria-label="矢印"><svg class="ic"><use href="#i-arrow"/></svg></button>
      <button class="tb" aria-label="四角形"><svg class="ic"><use href="#i-rect"/></svg></button>
      <button class="tb" aria-label="楕円"><svg class="ic"><use href="#i-oval"/></svg></button>
      <button class="tb" aria-label="テキスト ボックス"><svg class="ic" viewBox="0 0 16 16"><path d="M1 2.500h14v11H1z" fill="url(#gSheet)" stroke="#7d95c2"/><text x="2" y="9" font-family="Liberation Serif" font-weight="bold" font-size="8" fill="#222">A</text><path d="M9 5.500h5M9 7.500h5M3 10.500h11" stroke="#6b86bb"/></svg></button>
      <button class="tb" aria-label="縦書きテキスト ボックス"><svg class="ic" viewBox="0 0 16 16"><path d="M1 2.500h14v11H1z" fill="url(#gSheet)" stroke="#7d95c2"/><path d="M3.500 4v8M5.500 4v8M7.500 4v8M10.500 10v2M12.500 10v2" stroke="#55647f"/><text x="9" y="9" font-family="Liberation Serif" font-weight="bold" font-size="7" fill="#222">A</text></svg></button>
      <button class="tb" aria-label="ワードアート"><svg class="ic"><use href="#i-wordart"/></svg></button>
      <button class="tb" aria-label="図表"><svg class="ic"><use href="#i-diagram"/></svg></button>
      <button class="tb" aria-label="クリップ アート"><svg class="ic"><use href="#i-clip"/></svg></button>
      <button class="tb" aria-label="図"><svg class="ic"><use href="#i-pic"/></svg></button>
      <i class="sep"></i>
      <button class="tb" aria-label="塗りつぶし"><svg class="ic"><use href="#i-fill"/></svg></button>
      <button class="dd" aria-label="塗りつぶし一覧"><svg><use href="#i-dd"/></svg></button>
      <button class="tb" aria-label="線の色"><svg class="ic"><use href="#i-lcolor"/></svg></button>
      <button class="dd" aria-label="線の色一覧"><svg><use href="#i-dd"/></svg></button>
      <button class="tb" aria-label="文字の色"><svg class="ic" viewBox="0 0 16 16"><text x="2" y="11" font-family="Liberation Serif" font-weight="bold" font-size="15" fill="#35569b">A</text><path d="M0 12h16v4H0z" fill="#fff"/></svg></button>
      <button class="dd" aria-label="文字の色一覧"><svg><use href="#i-dd"/></svg></button>
      <button class="tb" aria-label="線の太さ"><svg class="ic"><use href="#i-lweight"/></svg></button>
      <button class="tb" aria-label="点線"><svg class="ic"><use href="#i-dash"/></svg></button>
      <button class="tb" aria-label="矢印の種類"><svg class="ic"><use href="#i-arrows"/></svg></button>
      <button class="tb" aria-label="影"><svg class="ic"><use href="#i-shadow"/></svg></button>
      <button class="tb" aria-label="3-D"><svg class="ic"><use href="#i-cube"/></svg></button>
      <button class="cap" aria-label="ツール バー オプション"><svg><use href="#i-more"/></svg></button>
    </div>

    <footer class="status">
      <span class="w1">スライド 5 &nbsp;/ &nbsp;7</span><span class="w1">戦略企画の提案</span><span class="w2">日本語</span><span class="w3"><svg class="book"><use href="#i-book"/></svg></span>
      <svg class="grow"><use href="#i-size"/></svg>
    </footer>
  </div>
</div>
</body>
</html>
```
FILE: styles.css
```css
* { box-sizing: border-box; }
body {
  margin: 0;
  background: #4a4448;
  font: 13px/16px "DejaVu Sans", "Noto Sans CJK JP", sans-serif;
  font-feature-settings: "palt";
  color: #111;
}
button, select, input, textarea {
  margin: 0; padding: 0; border: 0; background: none;
  font: inherit; font-feature-settings: inherit; color: inherit;
  border-radius: 0; white-space: nowrap; flex: none;
}
h1, h2, h3, ul, ol { margin: 0; padding: 0; font: inherit; font-feature-settings: inherit; list-style: none; }
svg { display: block; flex: none; }
i { flex: none; }
.defs { position: absolute; width: 0; height: 0; }
.ic { width: 16px; height: 16px; overflow: visible; }
.tl { stroke: #fff; stroke-width: 2; stroke-dasharray: 7 1 4 1 11 1; fill: none; opacity: .9; }

.frame {
  display: flex; flex-direction: column;
  min-height: 100vh;
  padding: 0 7px 7px;
  border: 1px solid #2b1a26;
  border-radius: 7px;
  background:
    linear-gradient(#e98cc0, #f0a6cf 70px, #f8d3e6 120px, #fbe4ef 184px, #e985bd 185px, #ea8cc1);
  box-shadow: inset 0 0 0 1px #f7c5df;
}
.titlebar {
  display: flex; align-items: center; gap: 5px;
  height: 29px; margin: 0 -7px; padding: 0 7px;
  border-radius: 6px 6px 0 0;
  background: linear-gradient(100deg, #f0a5cf 0, #f6c6e0 60px, #f0a8d0 150px, #df7cb4 200px, #e780b9 320px, #dd79b1 420px, #ea8bc2 455px, #ea8bc2 760px, #d97db2 840px, #ec92c6 880px, #f0a6d0 100%);
  box-shadow: inset 0 1px #f9cde4;
}
.titlebar h1 { font-family: "Noto Sans", sans-serif; font-size: 12px; }
.caption-buttons {
  display: flex; align-self: flex-start; margin-left: auto;
  border: 1px solid #6d3a56; border-top: 0; border-radius: 0 0 5px 5px; overflow: hidden;
}
.caption-buttons button {
  width: 28px; height: 18px; display: grid; place-items: center;
  background: linear-gradient(#f3c8de, #e9a9cb 49%, #cf7fa9 50%, #dba0bf);
  border-right: 1px solid #6d3a56;
}
.caption-buttons .close { width: 45px; border: 0; background: linear-gradient(#e8a088, #d2543c 49%, #b62310 50%, #dd6a42); }
.caption-buttons svg, .winbuttons svg { width: 14px; height: 12px; }

.client {
  flex: 1; display: flex; flex-direction: column;
  background: #c4daf8;
  box-shadow: 0 0 0 1px #6b3d58;
}
.menubar {
  display: flex; align-items: center;
  height: 30px; padding: 0 2px 2px 3px;
  background: linear-gradient(90deg, #9ebef5, #c4daf8 70%);
}
.menubar > button { height: 24px; padding: 0 7px; border: 1px solid transparent; }
.menubar > button.on { background: linear-gradient(#fff0c8, #ffc486); border-color: #000080; }
.grip { width: 3px; height: 17px; margin: 0 3px 0 4px; background: repeating-linear-gradient(#2f4f96 0 2px, transparent 2px 4px); }
.menubar .grip { margin: 0 1px 0 4px; }
.ask { display: flex; width: 330px; height: 24px; margin-left: auto; background: #fdfdfd; border: 1px solid #fff; }
.ask input { flex: 1; min-width: 0; padding: 0 0 3px 3px; }
.ask input::placeholder { color: #8a8a8a; opacity: 1; }
.arrow { display: grid; place-items: center; width: 14px; background: #c4daf8; }
.arrow svg, .dd svg, .da { width: 7px; height: 4px; }

.toolbar {
  display: flex; align-items: center; align-self: flex-start;
  height: 28px; margin-left: 3px; margin-bottom: 1px;
  border-radius: 3px;
  background: linear-gradient(#dfecfd, #d2e2fa 45%, #a6c4f3 70%, #7ba0e3 97%, #4a77bf);
}
.toolbar .grip { margin: 0 2px 0 1px; }
.toolbar + .mdi { margin-top: -1px; }
.tb { width: 23px; height: 24px; display: grid; place-items: center; border: 1px solid transparent; }
.tb.on { background: linear-gradient(#ffd796, #ffa95c); border-color: #000080; }
.ltr { font: bold 14px/16px "Liberation Serif", serif; }
.ltr.i { font-style: italic; }
.ltr.u { text-decoration: underline; }
.ltr.s { text-shadow: 1px 1px #8a98b8; }
.dd { width: 11px; height: 24px; display: grid; place-items: center; }
.off svg { fill: #7389b8; }
.sep { width: 2px; height: 18px; margin: 0 2px; background: linear-gradient(90deg, #6f93d6 50%, #fff 50%); }
.combo { display: flex; height: 24px; margin: 0 1px; background: #fdfdfd; border: 1px solid #fdfdfd; }
.combo select { flex: 1; padding: 0 0 1px 2px; appearance: none; outline: 0; }
.combo .arrow { pointer-events: none; }
.zoom { width: 170px; font-family: "Noto Sans", sans-serif; }
.font { width: 263px; }
.size { width: 85px; font-family: "Noto Sans", sans-serif; }
.txt { display: flex; align-items: center; height: 24px; padding: 0 4px; gap: 2px; }
.drawbar .txt { padding: 0 3px; gap: 3px; }
.cap {
  width: 11px; height: 28px; margin-left: 3px; padding: 0 0 3px 2px;
  display: flex; align-items: flex-end;
  border-radius: 0 3px 3px 0;
  background: linear-gradient(#5f8fe0, #1f4fac 55%, #0b2f86);
}
.cap svg { width: 8px; height: 8px; }

.mdi { flex: 1; display: flex; background: #9298ac; }
.win {
  flex: 1 1 0; min-width: 0;
  display: flex; flex-direction: column;
  padding: 0 7px 7px;
  border: 1px solid #16202c; border-radius: 7px 7px 0 0;
  background: linear-gradient(#a3bfe0, #b5cce8 20px, #a4bedd 60px, #c3d8f0 120px, #bcd3ef 121px);
  box-shadow: inset -1px -1px #35c4de, inset 1px 1px #dbe8f7;
}
.win.idle { border-color: #3e4248; background: linear-gradient(#c2cede, #d0dcec 30px, #d5e4f9 60px); box-shadow: inset 1px 1px #eef4fc; }
.wintitle { position: relative; height: 29px; display: flex; align-items: center; gap: 4px; padding: 5px 1px 0 2px; }
.idle h2 { color: #444; }
.winbuttons { display: flex; gap: 2px; margin: 0 0 1px auto; }
.winbuttons button {
  width: 31px; height: 17px; display: grid; place-items: center;
  border: 1px solid #5d7193; border-radius: 2px;
  background: linear-gradient(#dce8f6, #c3d5ea 49%, #9db6d4 50%, #bdd3ec);
}
.winbuttons .close { border-color: #4d1420; background: linear-gradient(#e7a294, #cf6654 49%, #b03422 50%, #d4705c); }
.idle .winbuttons button { border-color: #8391a8; background: linear-gradient(#dae5f3, #c9d6e7); }
.ring { position: absolute; left: 16px; top: -2px; width: 146px; height: 36px; border: 2px solid #f01010; border-radius: 50%; z-index: 2; }
.idle .ring { width: 150px; }

.doc { flex: 1; display: flex; padding: 1px; border: 1px solid #828a96; background: #fdfdfd; }
.pane { width: 82px; flex: none; display: flex; flex-direction: column; background: #fdfdfd; }
.tabs { position: relative; height: 19px; display: flex; background: #c4daf8; }
.tabart { position: absolute; width: 82px; height: 19px; }
.tabs button { position: relative; display: flex; align-items: center; }
.tabs button:nth-of-type(1) { width: 29px; padding-left: 11px; }
.tabs button:nth-of-type(2) { width: 32px; padding-left: 7px; }
.tabs button:nth-of-type(3) { flex: 1; padding-left: 5px; }
.t1 { width: 12px; height: 10px; }
.t2 { width: 12px; height: 11px; }
.t3 { width: 8px; height: 8px; }
.tabs .t1, .tabs .t2 { margin-top: 3px; }
.thumbs { flex: 1; padding-top: 9px; }
.thumbs li { position: relative; display: flex; height: 49px; gap: 4px; }
.no { width: 20px; display: flex; flex-direction: column; align-items: center; gap: 1px; padding-top: 3px; }
.no b { font: bold 13px/16px "Noto Sans CJK JP", sans-serif; }
.no svg { width: 12px; height: 10px; }
.th { width: 48px; height: 36px; shape-rendering: crispEdges; }
.sel .th { box-shadow: 0 0 0 2px #fff, 0 0 0 5px #3d6cc0; }
.idle .sel .th { box-shadow: 0 0 0 2px #fff, 0 0 0 5px #85878e; }
.mark { position: absolute; left: -2px; top: -10px; width: 93px; height: 60px; border: 2px solid #f01010; z-index: 2; }
.idle .mark { top: -14px; height: 66px; }
.views { display: flex; height: 16px; background: #c4daf8; }
.views button { width: 16px; height: 16px; }
.views .on { background: #ffc889; box-shadow: inset 0 0 0 1px #000080; }
.hscroll { flex: 1; display: flex; justify-content: space-between; align-items: center; padding: 0 5px; background: #eeecee; }
.hscroll svg { width: 5px; height: 8px; }
.split { width: 9px; flex: none; background: #d8e6fb; border-right: 1px solid #6a8ed4; }
.edit { flex: 1; min-width: 0; display: flex; flex-direction: column; background: #d8e6fb; }
.rowtop { height: 27px; padding: 0 16px 5px 27px; display: grid; place-items: center; }
.hruler {
  display: flex; justify-content: space-between; width: 358px; height: 12px; padding: 0 1px;
  background: #fdfdfd; font: 11px/12px "Noto Sans", sans-serif; text-align: center;
}
.hruler span { width: 16px; }
.rowmid { flex: 1; display: flex; }
.vcol { width: 27px; display: grid; place-items: center; padding-right: 5px; }
.vruler {
  display: flex; flex-direction: column; justify-content: space-between; width: 12px; height: 268px; padding: 14px 0;
  background: #fdfdfd; font: 11px/12px "Noto Sans", sans-serif; text-align: center;
}
.vruler span { width: 12px; height: 14px; transform: rotate(-90deg); }
.stage { flex: 1; display: grid; place-items: center; background: #9298ac; }
.slide {
  position: relative; display: flex; flex-direction: column;
  width: 362px; height: 272px; padding: 67px 36px 3px 56px;
  background: #000066; color: #fff;
  box-shadow: inset 0 0 0 1px #00002a, 4px 4px #000;
  font-family: "Noto Sans CJK JP", sans-serif;
}
.art { position: absolute; left: 0; top: 0; width: 362px; height: 272px; }
.slide h3 { font-size: 20px; line-height: 24px; margin-bottom: 23px; font-weight: 300; }
.slide ul { display: grid; gap: 2px; line-height: 17px; font-feature-settings: normal; }
.slide li { padding-left: 13px; background: linear-gradient(#0099b4, #0099b4) 1px 6px / 6px 6px no-repeat; }
.slide footer { display: flex; align-items: center; margin-top: auto; padding-left: 167px; gap: 37px; }
.slide b { position: relative; width: 42px; height: 23px; border: 2px solid #336699; background: #00cc99; color: #000066; font: bold 13px/19px "DejaVu Sans", sans-serif; text-align: center; }
.slide time { font: 5px/6px "Noto Sans", sans-serif; padding-top: 9px; }
.scroll { width: 16px; display: flex; flex-direction: column; background: #f0eef0; }
.scroll > button { height: 16px; display: grid; place-items: center; }
.a { width: 8px; height: 4px; }
.track { flex: 1; display: flex; flex-direction: column; }
.track::before, .track::after { content: ""; }
.at5::before { flex: 64; }
.at5::after { flex: 36; }
.at2::before { flex: 22; }
.at2::after { flex: 78; }
.knob {
  height: 42px; border: 1px solid #9a9a9e; border-radius: 2px;
  background: repeating-linear-gradient(#555 0 1px, transparent 1px 3px) center / 7px 9px no-repeat, linear-gradient(90deg, #f6f6f6, #e8e8ea 45%, #cfcfd4 50%, #dcdce0);
}
.jump { height: 33px; margin-bottom: 15px; background: #c4daf8; border-top: 1px solid #8b97ab; border-bottom: 1px solid #6a8ed4; display: flex; flex-direction: column; justify-content: space-evenly; align-items: center; }
.jump svg { width: 8px; height: 10px; }
.hsplit { height: 10px; border-top: 1px solid #fff; border-bottom: 1px solid #6a8ed4; }
.notes { display: flex; height: 23px; background: #fdfdfd; }
.notes textarea { flex: 1; min-width: 0; resize: none; overflow: hidden; padding: 3px 0 0 1px; font: 15px/20px "Noto Sans CJK JP", sans-serif; font-feature-settings: "palt"; }
.notes textarea::placeholder { color: #111; opacity: 1; }
.corner { width: 16px; margin-top: 7px; background: #f0eef0; border: solid #6a8ed4; border-width: 1px 0 0 1px; padding: 2px; }
.corner svg, .grow { width: 12px; height: 12px; }

.drawbar { margin-bottom: 0; }
.status {
  display: flex; gap: 5px; height: 24px; padding: 1px 2px 2px 4px;
  background: #f1eff1; border-top: 1px solid #8d8d92;
  font: 12px/16px "Noto Sans CJK JP", sans-serif;
}
.status span { display: flex; align-items: center; justify-content: center; border: 1px solid #c3cfcb; padding-bottom: 2px; }
.w1 { flex: 0 1 245px; }
.w2 { flex: 0 1 177px; }
.w3 { flex: 0 1 31px; }
.book { width: 20px; height: 16px; }
.grow { margin: auto 0 0 auto; }
```
